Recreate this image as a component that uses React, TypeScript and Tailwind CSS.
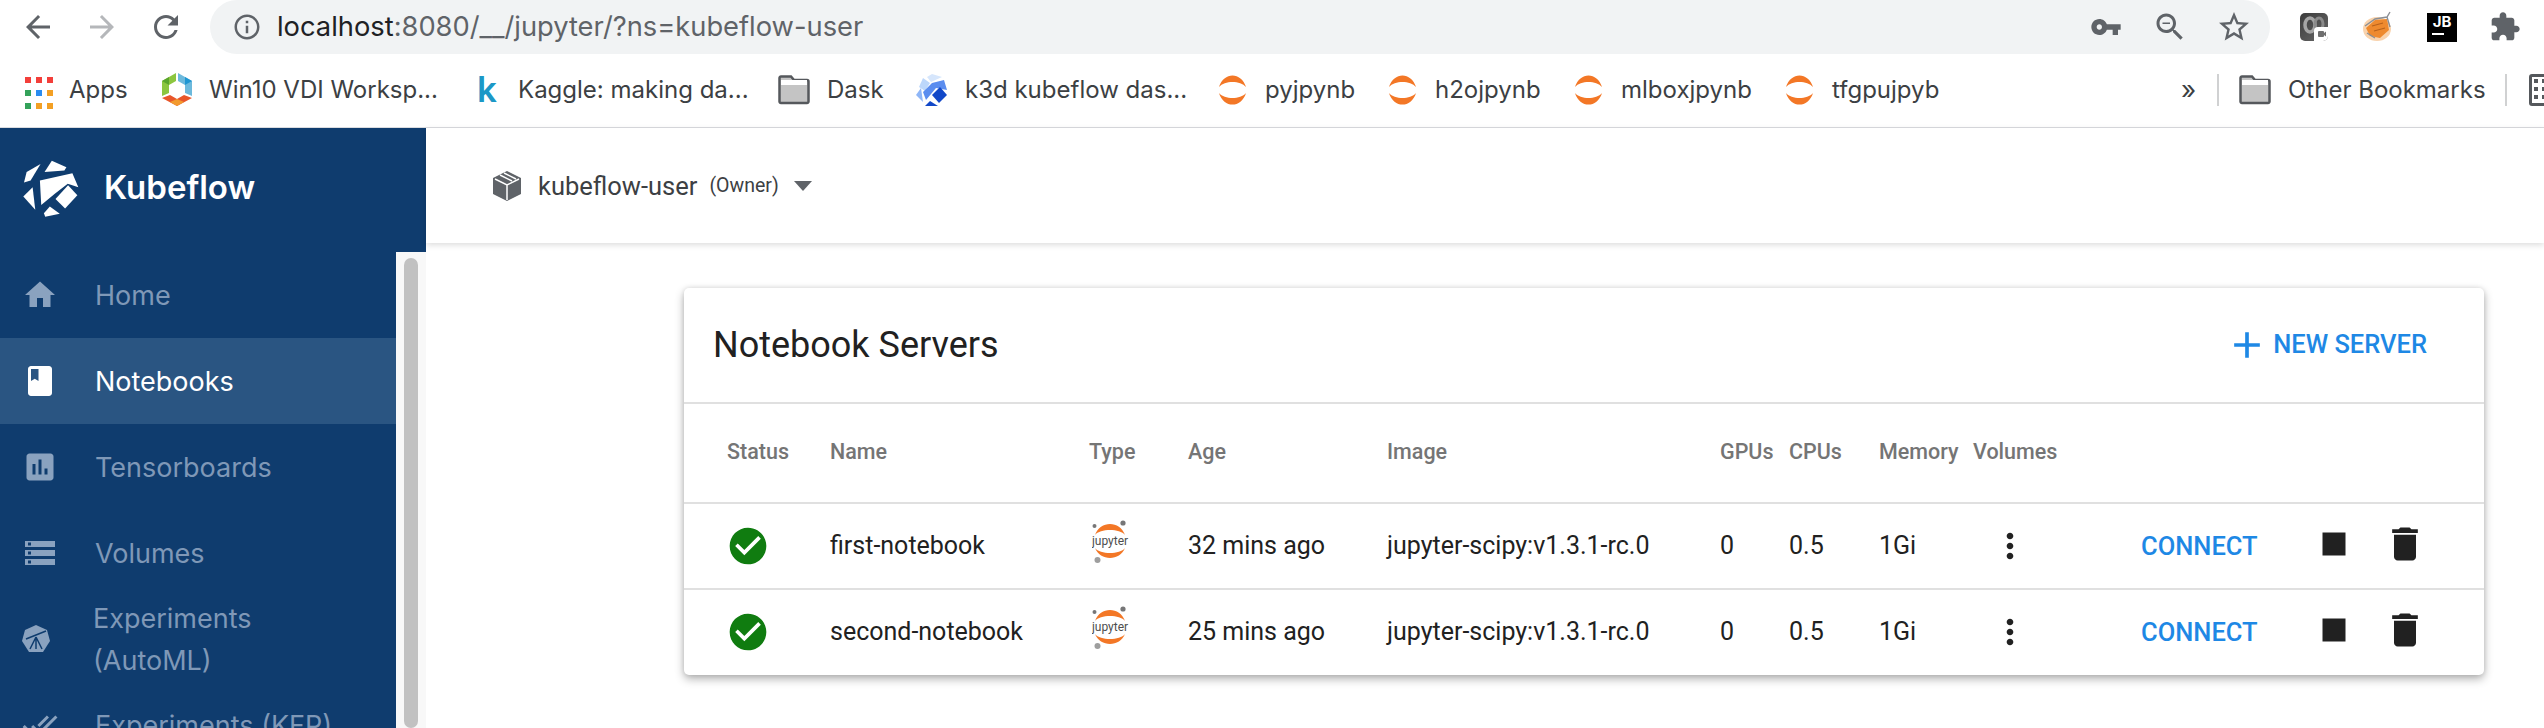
import type { ReactNode } from "react";

const P = {
  home: "M10 20v-6h4v6h5v-8h3L12 3 2 12h3v8z",
  book: "M18 2H6c-1.1 0-2 .9-2 2v16c0 1.1.9 2 2 2h12c1.1 0 2-.9 2-2V4c0-1.1-.9-2-2-2zM6 4h5v8l-2.5-1.5L6 12V4z",
  chart: "M19 3H5c-1.1 0-2 .9-2 2v14c0 1.1.9 2 2 2h14c1.1 0 2-.9 2-2V5c0-1.1-.9-2-2-2zM9 17H7v-7h2v7zm4 0h-2V7h2v10zm4 0h-2v-4h2v4z",
  storage: "M2 20h20v-4H2v4zm2-3h2v2H4v-2zM2 4v4h20V4H2zm4 3H4V5h2v2zm-4 7h20v-4H2v4zm2-3h2v2H4v-2z",
  doneAll: "M18 7l-1.41-1.41-6.34 6.34 1.41 1.41L18 7zm4.24-1.41L11.66 16.17 7.48 12l-1.41 1.41L11.66 19l12-12-1.42-1.41zM.41 13.41L6 19l1.41-1.41L1.83 12 .41 13.41z",
  check: "M12 2C6.48 2 2 6.48 2 12s4.48 10 10 10 10-4.48 10-10S17.52 2 12 2zm-2 15l-5-5 1.41-1.41L10 14.17l7.59-7.59L19 8l-9 9z",
  more: "M12 8c1.1 0 2-.9 2-2s-.9-2-2-2-2 .9-2 2 .9 2 2 2zm0 2c-1.1 0-2 .9-2 2s.9 2 2 2 2-.9 2-2-.9-2-2-2zm0 6c-1.1 0-2 .9-2 2s.9 2 2 2 2-.9 2-2-.9-2-2-2z",
  trash: "M6 19c0 1.1.9 2 2 2h8c1.1 0 2-.9 2-2V7H6v12zM19 4h-3.5l-1-1h-5l-1 1H5v2h14V4z",
  stop: "M6 6h12v12H6z",
  add: "M19 13h-6v6h-2v-6H5v-2h6V5h2v6h6v2z",
  back: "M20 11H7.83l5.59-5.59L12 4l-8 8 8 8 1.41-1.41L7.83 13H20v-2z",
  forward: "M12 4l-1.41 1.41L16.17 11H4v2h12.17l-5.58 5.59L12 20l8-8z",
  reload: "M17.65 6.35C16.2 4.9 14.21 4 12 4c-4.42 0-7.99 3.58-7.99 8s3.57 8 7.99 8c3.73 0 6.84-2.55 7.73-6h-2.08c-.82 2.33-3.04 4-5.65 4-3.31 0-6-2.69-6-6s2.69-6 6-6c1.66 0 3.14.69 4.22 1.78L13 11h7V4l-2.35 2.35z",
  info: "M11 7h2v2h-2zm0 4h2v6h-2zm1-9C6.48 2 2 6.48 2 12s4.48 10 10 10 10-4.48 10-10S17.52 2 12 2zm0 18c-4.41 0-8-3.59-8-8s3.59-8 8-8 8 3.59 8 8-3.59 8-8 8z",
  key: "M12.65 10C11.83 7.67 9.61 6 7 6c-3.31 0-6 2.69-6 6s2.69 6 6 6c2.61 0 4.83-1.67 5.65-4H17v4h4v-4h2v-4H12.65zM7 14c-1.1 0-2-.9-2-2s.9-2 2-2 2 .9 2 2-.9 2-2 2z",
  zoomOut: "M15.5 14h-.79l-.28-.27C15.41 12.59 16 11.11 16 9.5 16 5.91 13.09 3 9.5 3S3 5.91 3 9.5 5.91 16 9.5 16c1.61 0 3.09-.59 4.23-1.57l.27.28v.79l5 4.99L20.49 19l-4.99-5zm-6 0C7.01 14 5 11.99 5 9.5S7.01 5 9.5 5 14 7.01 14 9.5 11.99 14 9.5 14zM7 9h5v1H7z",
  star: "M22 9.24l-7.19-.62L12 2 9.19 8.63 2 9.24l5.46 4.73L5.82 21 12 17.27 18.18 21l-1.63-7.03L22 9.24zM12 15.4l-3.76 2.27 1-4.28-3.32-2.88 4.38-.38L12 6.1l1.71 4.04 4.38.38-3.32 2.88 1 4.28L12 15.4z",
  puzzle: "M20.5 11H19V7c0-1.1-.9-2-2-2h-4V3.5C13 2.12 11.88 1 10.5 1S8 2.12 8 3.5V5H4c-1.1 0-1.99.9-1.99 2v3.8H3.5c1.49 0 2.7 1.21 2.7 2.7s-1.21 2.7-2.7 2.7H2V20c0 1.1.9 2 2 2h3.8v-1.5c0-1.49 1.21-2.7 2.7-2.7 1.49 0 2.7 1.21 2.7 2.7V22H17c1.1 0 2-.9 2-2v-4h1.5c1.38 0 2.5-1.12 2.5-2.5S21.88 11 20.5 11z",
};

function Icon({ d, className }: { d: string; className: string }) {
  return (
    <svg viewBox="0 0 24 24" fill="currentColor" className={className}>
      <path d={d} />
    </svg>
  );
}

function KubeflowLogo() {
  return (
    <svg viewBox="70 290 170 172" className="h-[57px] w-[57px] shrink-0" fill="#fff">
      <path d="M72 358 L80 326 L122 302 L92 352 Z" />
      <path d="M134 326 L156 292 L200 312 L194 322 Z" />
      <path d="M120 352 L218 330 L236 372 L204 362 L165 392 L124 426 Z" />
      <path d="M167 408 L205 366 L233 396 L196 436 Z" />
      <path d="M70 400 L98 372 L106 440 Z" />
      <path d="M132 451 L150 430 L180 452 L136 461 Z" />
    </svg>
  );
}

function WinIcon() {
  return (
    <svg viewBox="0 0 30 33" className="h-[33px] w-[30px]">
      <path d="M0 8 L14 0 L14 8 L7 12 L7 20 L0 23 Z" fill="#8cc63f" />
      <path d="M0 8 L7 4 L7 12 Z" fill="#5aa52c" />
      <path d="M16 0 L30 8 L30 23 L23 20 L23 12 L16 8 Z" fill="#6cb9dc" />
      <path d="M23 4 L30 8 L23 12 Z" fill="#1e96d2" />
      <path d="M0 25 L8 22 L15 26 L22 22 L30 25 L15 33 Z" fill="#e8562a" />
      <path d="M8 29 L15 26 L22 29 L15 33 Z" fill="#f29a2e" />
    </svg>
  );
}

function K3dIcon() {
  return (
    <svg viewBox="0 0 32 32" className="h-[32px] w-[32px]">
      <path d="M3 13 L7 4 L14 9 L9 17 Z" fill="#bcd7fb" />
      <path d="M11 3 L16 0 L26 3 L15 8 Z" fill="#d6e6fc" />
      <path d="M7 18 L16 9 L28 6 L31 16 L20 14 L10 26 Z" fill="#5b8def" />
      <path d="M0 21 L5 14 L7 28 Z" fill="#8fb6f7" />
      <path d="M16 21 L24 13 L31 21 L23 29 Z" fill="#1248c8" />
      <path d="M9 32 L14 27 L22 32 Z" fill="#1248c8" />
    </svg>
  );
}

function JupyterFav() {
  return (
    <svg viewBox="0 0 32 30" className="h-[30px] w-[31px]">
      <path d="M2 12 C7 -4 25 -4 30 12 C24 5 8 5 2 12 Z" fill="#f37726" />
      <path d="M2 18 C8 25 24 25 30 18 C25 34 7 34 2 18 Z" fill="#f37726" />
    </svg>
  );
}

function FolderIcon() {
  return (
    <svg viewBox="0 0 32 30" className="h-[30px] w-[32px]">
      <path
        d="M1.5 3 a1.5 1.5 0 0 1 1.5 -1.5 h10 l3 3.5 h13 a1.5 1.5 0 0 1 1.5 1.5 v20 a1.5 1.5 0 0 1 -1.5 1.5 h-26 a1.5 1.5 0 0 1 -1.5 -1.5 z"
        fill="#c4c4c4"
        stroke="#55585c"
        strokeWidth="2.5"
      />
      <rect x="3" y="5" width="26" height="5" fill="#fff" />
    </svg>
  );
}

function AppsIcon() {
  const colors = ["#f33f3a", "#f33f3a", "#f33f3a", "#34a25a", "#2a8cf0", "#f3a024", "#34a25a", "#f3a024", "#f3a024"];
  return (
    <div className="mr-[1px] grid h-[26px] w-[26px] grid-cols-3 gap-[7px]">
      {colors.map((c, i) => (
        <span key={i} className="block h-[6px] w-[6px]" style={{ backgroundColor: c }} />
      ))}
    </div>
  );
}

function JupyterLogo() {
  return (
    <svg viewBox="0 0 37 43" className="-mt-[9px] ml-[3px] h-[43px] w-[37px]">
      <circle cx="2.5" cy="6" r="2" fill="#767677" />
      <circle cx="31" cy="3" r="2.6" fill="#767677" />
      <circle cx="5.5" cy="40" r="3" fill="#9e9e9e" />
      <path d="M3 15 C8 0.3 28 0.3 33 15 C28 8.3 8 8.3 3 15 Z" fill="#f37726" />
      <path d="M3 28 C8 34.7 28 34.7 33 28 C28 41.3 8 41.3 3 28 Z" fill="#f37726" />
      <text x="18" y="25" textAnchor="middle" fontSize="12" fontFamily="Roboto, sans-serif" fill="#4e4e4e">
        jupyter
      </text>
    </svg>
  );
}

function MeetExtension() {
  return (
    <svg viewBox="0 0 28 28" className="ml-[30px] h-[28px] w-[28px] shrink-0">
      <defs>
        <linearGradient id="meet" x1="0" x2="1" y1="0" y2="1">
          <stop offset="0" stopColor="#3a3a3a" />
          <stop offset="1" stopColor="#6a6a6a" />
        </linearGradient>
      </defs>
      <rect width="28" height="28" rx="5" fill="url(#meet)" />
      <ellipse cx="10" cy="12" rx="5" ry="7" fill="none" stroke="#a5a5a5" strokeWidth="3.5" />
      <ellipse cx="19" cy="11" rx="4" ry="6" fill="none" stroke="#8b8b8b" strokeWidth="3" />
      <path d="M14 28 V18 a4 4 0 0 1 4 -4 H28 V23 a5 5 0 0 1 -5 5 Z" fill="#fff" />
      <rect x="18" y="18" width="6" height="6" rx="1" fill="#6f6f6f" />
      <path d="M24 20 L26 18.5 V23.5 L24 22 Z" fill="#6f6f6f" />
    </svg>
  );
}

function TigerExtension() {
  return (
    <svg viewBox="0 0 29 32" className="ml-[35px] h-[32px] w-[29px] shrink-0">
      <ellipse cx="14" cy="18" rx="14" ry="12" fill="#f9d3ad" />
      <path d="M3 17 L12 9 L24 8 L26 19 L17 27 L7 25 Z" fill="#ee8a2f" />
      <path d="M2 15 L12 8 L24 6 L27 1 M24 6 L27 16 M4 22 L12 27" fill="none" stroke="#8b8f95" strokeWidth="1.4" />
      <path d="M9 15 L20 12 M11 20 L22 17" stroke="#b8621c" strokeWidth="1.2" />
    </svg>
  );
}

function Bookmark({ icon, label, className }: { icon: ReactNode; label: string; className: string }) {
  return (
    <div className={`flex shrink-0 items-center ${className}`}>
      {icon}
      <span className="ml-[17px] whitespace-nowrap">{label}</span>
    </div>
  );
}

function NavItem({ d, label, active }: { d: string; label: string; active?: boolean }) {
  return (
    <div className={`flex h-[86px] items-center pl-[22px] ${active ? "bg-[#2a5582] text-white" : "text-[#7f98b7]"}`}>
      <Icon d={d} className={`h-9 w-9 shrink-0 ${active ? "text-white" : "text-[#8aa2bf]"}`} />
      <span className="ml-[37px] pt-[2px]">{label}</span>
    </div>
  );
}

const rows = [
  { name: "first-notebook", age: "32 mins ago" },
  { name: "second-notebook", age: "25 mins ago" },
];

const gridCols = "grid grid-cols-[103px_259px_99px_199px_333px_69px_90px_94px_168px_181px_71px_67px] items-center pl-[43px]";

export default function App() {
  return (
    <div className="flex h-[728px] w-[2544px] flex-col overflow-hidden bg-white font-['Roboto',sans-serif]">
      {/* browser chrome */}
      <div className="flex h-[54px] shrink-0 items-center pl-[20px] text-[#5f6368]">
        <Icon d={P.back} className="h-9 w-9 shrink-0" />
        <Icon d={P.forward} className="ml-[28px] h-9 w-9 shrink-0 text-[#b5b7ba]" />
        <Icon d={P.reload} className="ml-[28px] h-9 w-9 shrink-0" />
        <div className="ml-[26px] flex h-[54px] w-[2060px] shrink-0 items-center rounded-[27px] bg-[#f1f3f4] pl-[22px] font-['Inter',sans-serif]">
          <Icon d={P.info} className="h-[30px] w-[30px] shrink-0" />
          <span className="ml-[15px] text-[27.3px] whitespace-nowrap text-[#5f6368]">
            <span className="text-[#202124]">localhost</span>:8080/__/jupyter/?ns=kubeflow-user
          </span>
          <Icon d={P.key} className="ml-auto h-8 w-8 shrink-0" />
          <Icon d={P.zoomOut} className="ml-[30px] h-9 w-9 shrink-0" />
          <Icon d={P.star} className="mr-[18px] ml-[28px] h-9 w-9 shrink-0" />
        </div>
        <MeetExtension />
        <TigerExtension />
        <div className="ml-[35px] flex h-[29px] w-[30px] shrink-0 flex-col items-center bg-black font-['Inter',sans-serif] text-[15px] leading-[17px] font-bold text-white">
          JB
          <span className="mt-[3px] mr-[9px] h-[2px] w-[12px] bg-white" />
        </div>
        <Icon d={P.puzzle} className="ml-[32px] h-8 w-8 shrink-0" />
      </div>

      <div className="flex h-[73px] shrink-0 items-center pb-[2px] pl-[25px] font-['Inter',sans-serif] text-[24px] text-[#3c4043]">
        <Bookmark icon={<AppsIcon />} label="Apps" className="w-[137px]" />
        <Bookmark icon={<WinIcon />} label="Win10 VDI Worksp..." className="w-[315px]" />
        <Bookmark
          icon={<span className="w-[24px] text-[35px] leading-none font-semibold text-[#1c98c6]">k</span>}
          label="Kaggle: making da..."
          className="w-[301px]"
        />
        <Bookmark icon={<FolderIcon />} label="Dask" className="w-[138px]" />
        <Bookmark icon={<K3dIcon />} label="k3d kubeflow das..." className="w-[301px]" />
        <Bookmark icon={<JupyterFav />} label="pyjpynb" className="w-[170px]" />
        <Bookmark icon={<JupyterFav />} label="h2ojpynb" className="w-[186px]" />
        <Bookmark icon={<JupyterFav />} label="mlboxjpynb" className="w-[211px]" />
        <Bookmark icon={<JupyterFav />} label="tfgpujpyb" className="w-[397px]" />
        <span className="w-[36px] shrink-0 text-[26px]">»</span>
        <span className="h-[32px] w-[2px] shrink-0 bg-[#d0d1d2]" />
        <Bookmark icon={<FolderIcon />} label="Other Bookmarks" className="ml-[20px] w-[266px]" />
        <span className="h-[32px] w-[2px] shrink-0 bg-[#d0d1d2]" />
        <div className="ml-[22px] grid h-[32px] w-[30px] shrink-0 grid-cols-3 gap-[3px] rounded-[3px] border-[3px] border-[#55585c] p-[2px]">
          {[0, 1, 2, 3, 4, 5, 6, 7, 8].map((n) => (
            <span key={n} className="h-[4px] w-[4px] bg-[#55585c]" />
          ))}
        </div>
      </div>
      <div className="h-[1px] shrink-0 bg-[#dadce0]" />

      {/* kubeflow */}
      <div className="flex min-h-0 flex-1">
        <aside className="flex w-[426px] shrink-0 flex-col bg-[#0f3c6e] font-['Inter',sans-serif]">
          <div className="flex h-[124px] shrink-0 items-center pb-[4px] pl-[23px]">
            <KubeflowLogo />
            <span className="ml-[24px] text-[33px] font-semibold text-white">Kubeflow</span>
          </div>
          <div className="flex min-h-0 flex-1">
            <nav className="w-[396px] text-[27px]">
              <NavItem d={P.home} label="Home" />
              <NavItem d={P.book} label="Notebooks" active />
              <NavItem d={P.chart} label="Tensorboards" />
              <NavItem d={P.storage} label="Volumes" />
              <div className="flex h-[86px] items-center pl-[22px] text-[#7f98b7]">
                <svg viewBox="0 0 28 28" className="h-[28px] w-[28px] shrink-0">
                  <path d="M14 0 L25 5 L28 16 L21 27 L7 27 L0 16 L3 5 Z" fill="#8aa2bf" />
                  <path d="M4 14 L24 6 M14 12 L8 24 M14 12 L20 24 M14 12 V24" stroke="#0f3c6e" strokeWidth="1.5" />
                </svg>
                <span className="ml-[43px] pt-[1px] leading-[42px]">
                  Experiments
                  <br />
                  (AutoML)
                </span>
              </div>
              <NavItem d={P.doneAll} label="Experiments (KFP)" />
            </nav>
            <div className="w-[30px] bg-[#f8f8f8] px-[8px] pt-[6px]">
              <div className="h-full rounded-full bg-[#c1c1c1]" />
            </div>
          </div>
        </aside>

        <main className="min-w-0 flex-1">
          <div className="flex h-[115px] items-center pl-[66px] text-[#3c4043] shadow-[0_2px_6px_rgba(0,0,0,0.14)]">
            <svg viewBox="0 0 30 32" className="h-[32px] w-[30px] shrink-0">
              <path d="M15 1 L29 8 V24 L15 31 L1 24 V8 Z" fill="#5f6368" />
              <path d="M3 9 L15 15 L27 9 M15 15 V30" fill="none" stroke="#fff" strokeWidth="1.5" />
              <path d="M8 5 L20 11 M12 3 L24 9" stroke="#fff" strokeWidth="1.5" />
            </svg>
            <span className="ml-[16px] pt-[1px] text-[25.5px]">kubeflow-user</span>
            <span className="ml-[12px] pt-[1px] text-[19.5px]">(Owner)</span>
            <span className="ml-[15px] h-0 w-0 border-x-[9px] border-t-[10px] border-x-transparent border-t-[#5f6368]" />
          </div>

          <section className="mt-[45px] ml-[258px] h-[387px] w-[1800px] rounded-[5px] bg-white shadow-[0_4px_10px_rgba(0,0,0,0.3),0_0_5px_rgba(0,0,0,0.1)]">
            <div className="flex h-[116px] items-center border-b-2 border-[#e0e0e0] pr-[57px] pl-[29px]">
              <h1 className="text-[36px] font-normal text-[#212121]">Notebook Servers</h1>
              <Icon d={P.add} className="ml-auto h-11 w-11 text-[#1e88e5]" />
              <span className="ml-[4px] pb-[2px] text-[25.5px] font-medium text-[#1e88e5]">NEW SERVER</span>
            </div>
            <div className={`${gridCols} h-[100px] border-b-2 border-[#e0e0e0] pb-[2px] text-[21.5px] font-medium text-[#757575]`}>
              <span>Status</span>
              <span>Name</span>
              <span>Type</span>
              <span>Age</span>
              <span>Image</span>
              <span>GPUs</span>
              <span>CPUs</span>
              <span>Memory</span>
              <span>Volumes</span>
            </div>
            {rows.map((r, i) => (
              <div
                key={r.name}
                className={`${gridCols} h-[86px] border-b-2 text-[25px] text-[#212121] ${i === 0 ? "border-[#e0e0e0]" : "border-transparent"}`}
              >
                <Icon d={P.check} className="-ml-[1px] h-[44px] w-[44px] text-[#107c10]" />
                <span>{r.name}</span>
                <JupyterLogo />
                <span>{r.age}</span>
                <span>jupyter-scipy:v1.3.1-rc.0</span>
                <span>0</span>
                <span>0.5</span>
                <span>1Gi</span>
                <Icon d={P.more} className="ml-[17px] h-10 w-10" />
                <span className="text-[25.5px] font-medium text-[#1e88e5]">CONNECT</span>
                <Icon d={P.stop} className="-mt-[4px] -ml-[11px] h-[46px] w-[46px] max-w-none" />
                <Icon d={P.trash} className="-mt-[4px] -ml-[10px] h-11 w-11 max-w-none" />
              </div>
            ))}
          </section>
        </main>
      </div>
    </div>
  );
}
